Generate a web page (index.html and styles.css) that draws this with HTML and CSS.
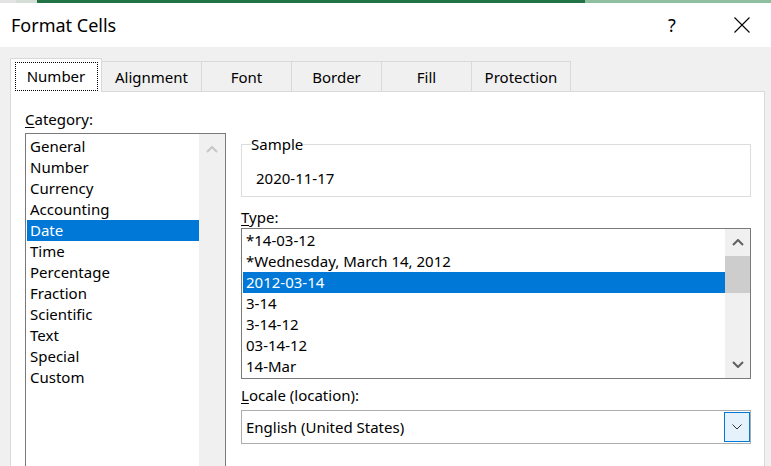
FILE: index.html
```html
<!DOCTYPE html>
<html lang="en">
<head>
<meta charset="utf-8">
<title>Format Cells</title>
<link rel="stylesheet" href="styles.css">
</head>
<body>
<div class="strip"><span class="s1"></span><span class="s2"></span><span class="s3"></span><span class="s4"></span></div>
<header class="titlebar">
  <div class="title">Format Cells</div>
  <span class="help">?</span>
  <span class="close"><svg width="16" height="16" viewBox="0 0 16 16"><path d="M0.5 0.5 L15.5 15.5 M15.5 0.5 L0.5 15.5" stroke="#000" stroke-width="1.1" fill="none"/></svg></span>
</header>
<main class="body">
  <nav class="tabs">
    <div class="tab active w-number"><span class="focus">Number</span></div>
    <div class="tab w-align">Alignment</div>
    <div class="tab w-font">Font</div>
    <div class="tab w-border">Border</div>
    <div class="tab w-fill">Fill</div>
    <div class="tab w-prot">Protection</div>
  </nav>
  <section class="panel">
    <div class="col-left">
      <div class="label"><span class="ul">C</span>ategory:</div>
      <div class="listbox cat">
        <ul class="items">
          <li>General</li>
          <li>Number</li>
          <li>Currency</li>
          <li>Accounting</li>
          <li class="sel">Date</li>
          <li>Time</li>
          <li>Percentage</li>
          <li>Fraction</li>
          <li>Scientific</li>
          <li>Text</li>
          <li>Special</li>
          <li>Custom</li>
        </ul>
        <div class="vscroll">
          <div class="arrow"><svg width="12" height="7" viewBox="0 0 12 7"><path d="M1 6 L6 1 L11 6" stroke="#c6c6c6" stroke-width="2" fill="none"/></svg></div>
        </div>
      </div>
    </div>
    <div class="col-right">
      <fieldset class="sample">
        <legend>Sample</legend>
        <div class="sample-val">2020-11-17</div>
      </fieldset>
      <div class="label lbl-type"><span class="ul">T</span>ype:</div>
      <div class="listbox type">
        <ul class="items">
          <li>*14-03-12</li>
          <li>*Wednesday, March 14, 2012</li>
          <li class="sel">2012-03-14</li>
          <li>3-14</li>
          <li>3-14-12</li>
          <li>03-14-12</li>
          <li>14-Mar</li>
        </ul>
        <div class="vscroll">
          <div class="arrow"><svg width="12" height="7" viewBox="0 0 12 7"><path d="M1 6 L6 1 L11 6" stroke="#606060" stroke-width="2" fill="none"/></svg></div>
          <div class="thumb"></div>
          <div class="track"></div>
          <div class="arrow"><svg width="12" height="7" viewBox="0 0 12 7"><path d="M1 1 L6 6 L11 1" stroke="#606060" stroke-width="2" fill="none"/></svg></div>
        </div>
      </div>
      <div class="label lbl-locale"><span class="ul">L</span>ocale (location):</div>
      <div class="combo">
        <span class="combo-text">English (United States)</span>
        <span class="dd"><svg width="10" height="6" viewBox="0 0 10 6"><path d="M0.5 0.5 L5 5 L9.5 0.5" stroke="#333" stroke-width="1" fill="none"/></svg></span>
      </div>
    </div>
  </section>
</main>
</body>
</html>
```
FILE: styles.css
```css
* { box-sizing: border-box; }
html, body { margin: 0; padding: 0; }
body {
  width: 771px;
  height: 466px;
  overflow: hidden;
  background: #f0f0f0;
  font-family: "Noto Sans", "Open Sans", sans-serif;
  font-size: 15px;
  line-height: 20px;
  color: #000;
}
.strip { display: flex; height: 3px; }
.s1 { width: 16px; background: #e4e4e4; }
.s2 { width: 21px; background: #d6ddd8; }
.s3 { width: 548px; background: #217346; }
.s4 { flex: 1; background: #8fbf9f; }

.titlebar {
  height: 44px;
  background: #fff;
  display: flex;
  align-items: center;
  padding-left: 11px;
}
.title { flex: 1; font-size: 18px; line-height: 24px; }
.help { width: 16px; text-align: center; font-size: 18px; line-height: 24px; margin-right: 54px; }
.close { width: 16px; height: 16px; margin-right: 21px; display: flex; }

.body { padding: 11px 6px 0 10px; }
.tabs { display: flex; align-items: flex-end; height: 33px; }
.tab {
  height: 30px;
  border: 1px solid #d9d9d9;
  border-bottom: none;
  margin-left: -1px;
  display: flex;
  align-items: center;
  justify-content: center;
  padding-top: 1px;
}
.tab.active {
  height: 34px;
  margin-left: 0;
  margin-bottom: -1px;
  background: #fff;
  position: relative;
  z-index: 1;
  padding-top: 0;
}
.focus {
  border: 1px dotted #000;
  width: 83px;
  height: 29px;
  display: flex;
  align-items: center;
  justify-content: center;
  margin-top: 1px;
}
.w-number { width: 92px; }
.w-align { width: 101px; }
.w-font { width: 91px; }
.w-border { width: 91px; }
.w-fill { width: 91px; }
.w-prot { width: 100px; }

.panel {
  background: #fff;
  border: 1px solid #d9d9d9;
  border-bottom: none;
  height: 375px;
  padding: 17px 0 0 14px;
  display: grid;
  grid-template-columns: 201px 510px;
  column-gap: 15px;
  align-items: start;
}
.label { height: 20px; }
.ul { text-decoration: underline; text-underline-offset: 2px; text-decoration-thickness: 1px; }
.col-left .label { margin-bottom: 4px; }

.listbox {
  border: 1px solid #7a7a7a;
  display: flex;
  background: #fff;
}
.items { list-style: none; margin: 0; padding: 1px 0 0 1px; flex: 1; }
.items li { height: 21px; line-height: 21px; padding-left: 3px; white-space: nowrap; }
.items li.sel { background: #0078d7; color: #fff; }
.listbox.cat { height: 333px; border-bottom: none; }
.listbox.cat .items { padding-top: 2px; }
.listbox.type { height: 151px; }

.vscroll { width: 26px; background: #f0f0f0; display: flex; flex-direction: column; }
.type .vscroll { width: 25px; }
.arrow { height: 27px; display: flex; align-items: center; justify-content: center; }
.cat .arrow { height: 31px; }
.thumb { height: 37px; background: #cdcdcd; }
.track { flex: 1; }

.sample {
  margin: 25px 0 0 0;
  border: 1px solid #dcdcdc;
  padding: 0 8px 8px 9px;
  min-width: 0;
}
.sample legend { padding: 0; line-height: 20px; }
.sample-val { margin: 14px 0 0 5px; }
.lbl-type { margin-top: 10px; margin-bottom: 1px; }
.lbl-locale { margin-top: 6px; margin-bottom: 5px; }

.combo {
  height: 34px;
  border: 1px solid #adadad;
  display: flex;
  align-items: center;
  padding-left: 4px;
}
.combo-text { flex: 1; }
.dd {
  width: 26px;
  margin: 1px 0;
  background: #e5f1fb;
  border: 1px solid #0078d7;
  display: flex;
  align-items: center;
  justify-content: center;
  align-self: stretch;
}
```
